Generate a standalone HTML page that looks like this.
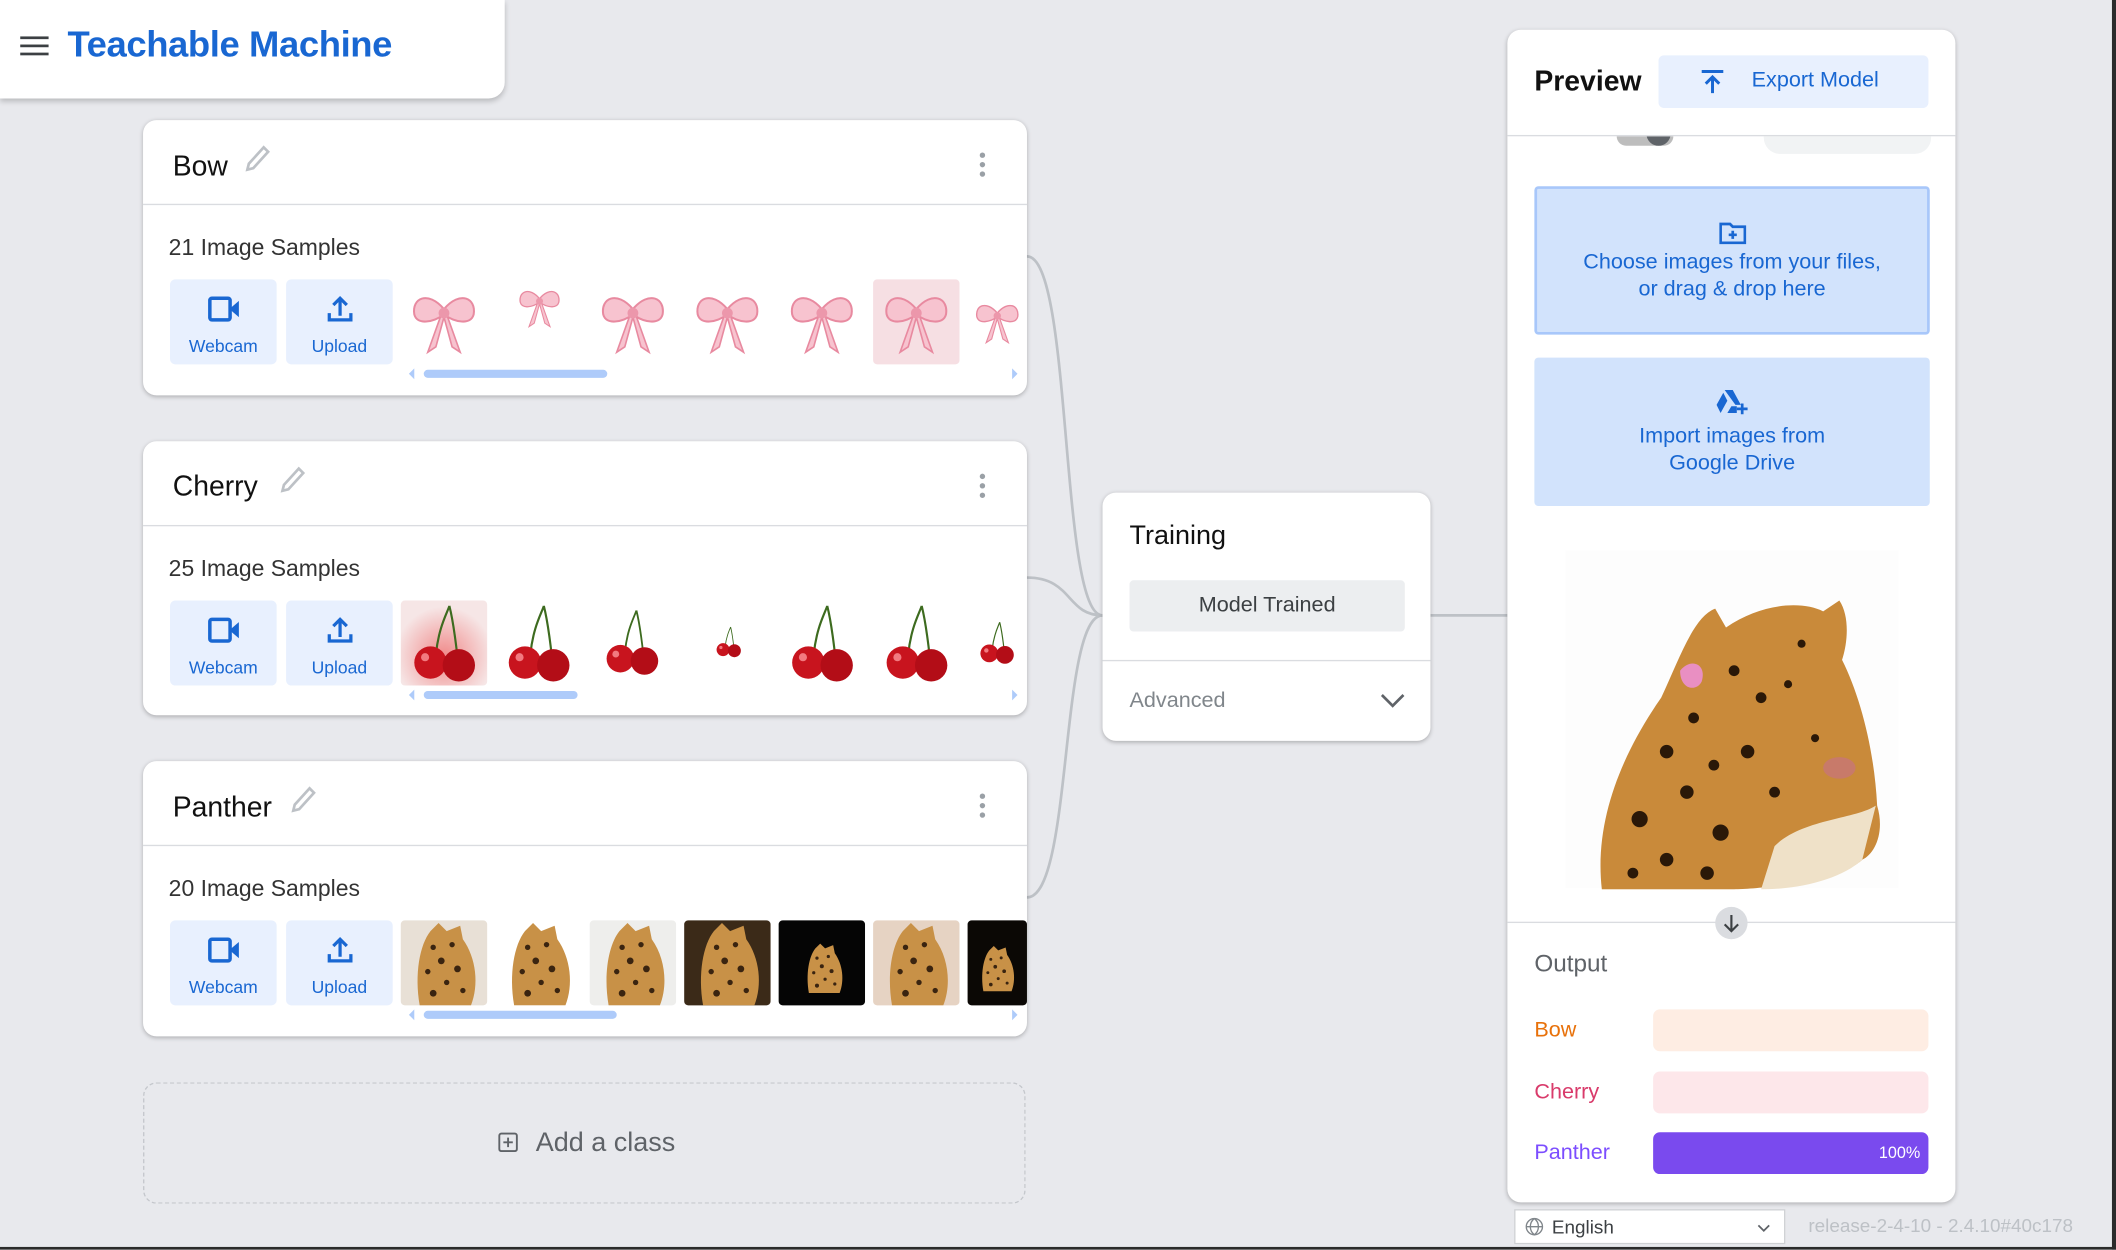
<!DOCTYPE html>
<html><head><meta charset="utf-8"><style>
html,body{margin:0;padding:0;width:2116px;height:1249px;overflow:hidden;background:#e8e9ed;}
#w{position:absolute;left:0;top:0;width:1568px;height:926px;transform:scale(1.34949);transform-origin:0 0;font-family:"Liberation Sans",sans-serif;}
.a{position:absolute;}
.card{position:absolute;background:#fff;border-radius:10px;box-shadow:0 1px 3px rgba(0,0,0,.25);}
.ttl{position:absolute;left:22px;top:22px;font-size:21px;color:#111;}
.pen{position:absolute;top:18px;}
.keb{position:absolute;left:620px;top:24px;width:4px;}
.keb i{display:block;width:4px;height:4px;border-radius:2px;background:#9aa0a6;margin-bottom:3px;}
.hr{position:absolute;left:0;right:0;top:62px;border-top:1px solid #dadce0;}
.cnt{position:absolute;left:19px;top:85px;font-size:17px;color:#333;}
.btn{position:absolute;top:118px;width:79px;height:63px;background:#e8f0fe;border-radius:4px;color:#1967d2;font-size:13px;text-align:center;}
.btn span{position:absolute;left:0;right:0;top:42px;}
.btn svg{position:absolute;left:28px;top:12px;}
.img{position:absolute;top:118px;width:64px;height:63px;border-radius:3px;overflow:hidden;}
.sb{position:absolute;top:185px;left:208px;height:6px;border-radius:3px;background:#aecbfa;}
.ar{position:absolute;top:184px;width:0;height:0;border-top:4px solid transparent;border-bottom:4px solid transparent;}
.bl{position:absolute;left:20px;font-size:16px;}
.bar{position:absolute;left:108px;width:204px;height:31px;border-radius:5px;}
</style></head><body><div id="w">
<svg class="a" style="left:0;top:0" width="1568" height="926"><g fill="none" stroke="#bdc1c6" stroke-width="2">
<path d="M761 190 C795 190,785 456,817 456"/><path d="M761 428 C795 428,790 456,817 456"/><path d="M761 665 C795 665,785 456,817 456"/><path d="M1060 456 H1117"/></g></svg>
<div class="a" style="left:1565px;top:0;width:3px;height:926px;background:#2b2b2b"></div>
<div class="a" style="left:0;top:924px;width:1568px;height:2px;background:#2b2b2b"></div>

<div class="a" style="left:0;top:0;width:374px;height:73px;background:#fff;border-radius:0 0 12px 0;box-shadow:0 2px 4px rgba(0,0,0,.2)">
<div class="a" style="left:15px;top:27px;width:21px"><div style="height:2px;background:#3c4043;margin-bottom:4px"></div><div style="height:2px;background:#3c4043;margin-bottom:4px"></div><div style="height:2px;background:#3c4043"></div></div>
<div class="a" style="left:50px;top:18px;font-size:27px;font-weight:bold;color:#1967d2;letter-spacing:-0.3px">Teachable Machine</div></div>

<svg width="0" height="0" style="position:absolute"><defs>
<symbol id="cam" viewBox="0 0 24 20"><rect x="1.5" y="2" width="15" height="16" rx="1.5" fill="none" stroke="#1967d2" stroke-width="2.6"/><path d="M16 10 L23 4 V16 Z" fill="#1967d2"/></symbol>
<symbol id="up" viewBox="0 0 20 20"><path d="M10 15 V2 M5 7 L10 2 L15 7 M2 13 V18 H18 V13" fill="none" stroke="#1967d2" stroke-width="2.4"/></symbol>
<symbol id="pen" viewBox="0 0 20 20"><path d="M3 17 L4 13 L14 2 L17 5 L7 16 Z" fill="none" stroke="#bdc1c6" stroke-width="1.8"/></symbol>
<symbol id="bow" viewBox="0 0 64 63"><path d="M32 22 C20 8,8 14,10 26 C12 34,24 32,32 26 Z M32 22 C44 8,56 14,54 26 C52 34,40 32,32 26 Z" fill="#f7c3cf" stroke="#e88aa0" stroke-width="1.5"/><path d="M30 26 L20 54 L26 50 L32 28 L38 50 L44 54 L34 26Z" fill="#f7c3cf" stroke="#e88aa0" stroke-width="1.2"/><circle cx="32" cy="25" r="4" fill="#ec97ab"/></symbol>
<symbol id="chr" viewBox="0 0 64 63"><path d="M26 40 C28 20,34 10,36 4 M42 42 C40 24,38 12,36 4" fill="none" stroke="#3d6b1f" stroke-width="1.6"/><circle cx="22" cy="46" r="12" fill="#c8141e"/><circle cx="43" cy="48" r="12" fill="#b30d17"/><circle cx="18" cy="42" r="3" fill="#f27a80"/></symbol>
<symbol id="leo" viewBox="0 0 64 63"><path d="M14 63 C10 40,14 18,22 8 L28 2 L34 8 L44 4 L46 14 C56 28,58 48,52 63Z" fill="#c89147"/><g fill="#3a2410"><circle cx="24" cy="20" r="2"/><circle cx="38" cy="18" r="2"/><circle cx="30" cy="30" r="2.5"/><circle cx="20" cy="38" r="2"/><circle cx="42" cy="36" r="2.5"/><circle cx="34" cy="46" r="2"/><circle cx="24" cy="54" r="2.5"/><circle cx="46" cy="52" r="2"/></g></symbol>
</defs></svg>

<!-- Bow card -->
<div class="card" style="left:106px;top:89px;width:655px;height:204px">
<div class="ttl" style="top:23px">Bow</div><svg class="pen" style="left:74px" width="22" height="22"><use href="#pen"/></svg>
<div class="keb"><i></i><i></i><i></i></div><div class="hr"></div>
<div class="cnt">21 Image Samples</div>
<div class="btn" style="left:20px"><svg width="24" height="20"><use href="#cam"/></svg><span>Webcam</span></div>
<div class="btn" style="left:106px"><svg width="20" height="20" style="left:30px"><use href="#up"/></svg><span>Upload</span></div>
<svg class="img" style="left:191px" width="64" height="63"><use href="#bow"/></svg>
<svg class="img" style="left:261px" width="64" height="63"><use href="#bow" transform="translate(12 0) scale(.65)"/></svg>
<svg class="img" style="left:331px" width="64" height="63"><use href="#bow"/></svg>
<svg class="img" style="left:401px" width="64" height="63"><use href="#bow"/></svg>
<svg class="img" style="left:471px" width="64" height="63"><use href="#bow"/></svg>
<svg class="img" style="left:541px;background:#f6dfe3" width="64" height="63"><use href="#bow"/></svg>
<svg class="img" style="left:611px;width:44px" width="44" height="63"><use href="#bow"/></svg>
<div class="ar" style="left:197px;border-right:4px solid #aecbfa"></div><div class="sb" style="width:136px"></div><div class="ar" style="left:644px;border-left:4px solid #aecbfa"></div>
</div>

<!-- Cherry card -->
<div class="card" style="left:106px;top:327px;width:655px;height:203px">
<div class="ttl" style="top:22px">Cherry</div><svg class="pen" style="left:100px" width="22" height="22"><use href="#pen"/></svg>
<div class="keb"><i></i><i></i><i></i></div><div class="hr"></div>
<div class="cnt">25 Image Samples</div>
<div class="btn" style="left:20px"><svg width="24" height="20"><use href="#cam"/></svg><span>Webcam</span></div>
<div class="btn" style="left:106px"><svg width="20" height="20" style="left:30px"><use href="#up"/></svg><span>Upload</span></div>
<svg class="img" style="left:191px;background:radial-gradient(circle at 50% 65%,#f08a8a,#f6e6e6 70%)" width="64" height="63"><use href="#chr"/></svg>
<svg class="img" style="left:261px" width="64" height="63"><use href="#chr"/></svg>
<svg class="img" style="left:331px" width="64" height="63"><use href="#chr" transform="translate(4 4) scale(.85)"/></svg>
<svg class="img" style="left:401px" width="64" height="63"><use href="#chr" transform="translate(20 18) scale(.4)"/></svg>
<svg class="img" style="left:471px" width="64" height="63"><use href="#chr"/></svg>
<svg class="img" style="left:541px" width="64" height="63"><use href="#chr"/></svg>
<svg class="img" style="left:611px;width:44px" width="44" height="63"><use href="#chr" transform="translate(4 6) scale(.8)"/></svg>
<div class="ar" style="left:197px;border-right:4px solid #aecbfa"></div><div class="sb" style="width:114px"></div><div class="ar" style="left:644px;border-left:4px solid #aecbfa"></div>
</div>

<!-- Panther card -->
<div class="card" style="left:106px;top:564px;width:655px;height:204px">
<div class="ttl" style="top:23px">Panther</div><svg class="pen" style="left:108px" width="22" height="22"><use href="#pen"/></svg>
<div class="keb"><i></i><i></i><i></i></div><div class="hr"></div>
<div class="cnt">20 Image Samples</div>
<div class="btn" style="left:20px"><svg width="24" height="20"><use href="#cam"/></svg><span>Webcam</span></div>
<div class="btn" style="left:106px"><svg width="20" height="20" style="left:30px"><use href="#up"/></svg><span>Upload</span></div>
<svg class="img" style="left:191px;background:#e8e0d6" width="64" height="63"><use href="#leo"/></svg>
<svg class="img" style="left:261px" width="64" height="63"><use href="#leo"/></svg>
<svg class="img" style="left:331px;background:#eeeeec" width="64" height="63"><use href="#leo"/></svg>
<svg class="img" style="left:401px;background:#3b2a18" width="64" height="63"><use href="#leo"/></svg>
<svg class="img" style="left:471px;background:#050505" width="64" height="63"><use href="#leo" transform="translate(14 16) scale(.6)"/></svg>
<svg class="img" style="left:541px;background:#e6d3c3" width="64" height="63"><use href="#leo"/></svg>
<svg class="img" style="left:611px;width:44px;background:#0b0805" width="44" height="63"><use href="#leo" transform="translate(4 10) scale(.8)"/></svg>
<div class="ar" style="left:197px;border-right:4px solid #aecbfa"></div><div class="sb" style="width:143px"></div><div class="ar" style="left:644px;border-left:4px solid #aecbfa"></div>
</div>

<div class="a" style="left:106px;top:802px;width:652px;height:88px;border:1.5px dashed #c4c7cc;border-radius:10px;">
<svg class="a" style="left:262px;top:36px" width="16" height="16"><rect x="1" y="1" width="13" height="13" rx="1.5" fill="none" stroke="#5f6368" stroke-width="1.4"/><path d="M7.5 4 V11 M4 7.5 H11" stroke="#5f6368" stroke-width="1.4"/></svg>
<div class="a" style="left:290px;top:33px;font-size:20px;color:#5f6368">Add a class</div></div>

<!-- Training -->
<div class="card" style="left:817px;top:365px;width:243px;height:184px">
<div class="a" style="left:20px;top:21px;font-size:20px;color:#111">Training</div>
<div class="a" style="left:20px;top:65px;width:204px;height:38px;background:#eceef0;border-radius:3px;color:#3c4043;font-size:16px;text-align:center;line-height:38px">Model Trained</div>
<div class="a" style="left:0;right:0;top:124px;border-top:1px solid #dadce0"></div>
<div class="a" style="left:20px;top:146px;font-size:16px;color:#80868b">Advanced</div>
<svg class="a" style="left:206px;top:148px" width="18" height="12"><path d="M1 2 L9 10 L17 2" fill="none" stroke="#5f6368" stroke-width="2"/></svg>
</div>

<!-- Preview -->
<div class="card" style="left:1117px;top:22px;width:332px;height:869px;overflow:hidden">
<div class="a" style="left:20px;top:27px;font-size:21px;color:#111;font-weight:bold">Preview</div>
<div class="a" style="left:112px;top:19px;width:200px;height:39px;background:#e8f0fe;border-radius:4px">
<svg class="a" style="left:30px;top:10px" width="20" height="20"><path d="M2 2 H18 M10 18 V6 M5 11 L10 6 L15 11" fill="none" stroke="#1967d2" stroke-width="2.2"/></svg>
<div class="a" style="left:69px;top:10px;font-size:16px;color:#1967d2">Export Model</div></div>
<div class="a" style="left:81px;top:72px;width:42px;height:14px;border-radius:7px;background:#bdbdbd"></div>
<div class="a" style="left:103px;top:68px;width:18px;height:18px;border-radius:9px;background:#5f6368"></div>
<div class="a" style="left:190px;top:72px;width:124px;height:20px;border-radius:0 0 12px 12px;background:#f1f3f4"></div>
<div class="a" style="left:0;right:0;top:60px;height:19px;background:#fff"></div>
<div class="a" style="left:0;right:0;top:78px;border-top:1px solid #dadce0"></div>
<div class="a" style="left:20px;top:116px;width:289px;height:106px;background:#d2e3fc;border:2px solid #a8c7fa;border-radius:3px;color:#1967d2;font-size:16px;text-align:center">
<svg class="a" style="left:135px;top:24px" width="20" height="17"><path d="M1 2 H8 L10 4 H19 V16 H1 Z" fill="none" stroke="#1967d2" stroke-width="2"/><path d="M10 7 V13 M7 10 H13" stroke="#1967d2" stroke-width="2"/></svg>
<div class="a" style="left:0;right:0;top:45px;line-height:20px">Choose images from your files,<br>or drag &amp; drop here</div></div>
<div class="a" style="left:20px;top:243px;width:293px;height:110px;background:#d2e3fc;border-radius:3px;color:#1967d2;font-size:16px;text-align:center">
<svg class="a" style="left:135px;top:23px" width="24" height="20"><path d="M6 1 H12 L18 12 H14 Z M5 3 L0 12 L3 18 L8 9 Z M8 18 L11 13 H15 V18Z" fill="#1967d2"/><path d="M19 11 V19 M15 15 H23" stroke="#1967d2" stroke-width="2"/></svg>
<div class="a" style="left:0;right:0;top:49px;line-height:20px">Import images from<br>Google Drive</div></div>
<div class="a" style="left:43px;top:386px;width:247px;height:250px;background:#fdfdfd"></div>
<svg class="a" style="left:58px;top:415px" width="230" height="222"><path d="M12 222 C6 170,28 120,56 80 C70 50,80 20,96 14 L104 28 C130 10,160 8,176 16 L188 8 C196 20,194 40,190 52 C204 80,214 120,216 160 C222 180,214 196,205 200 C190 215,130 222,110 222 Z" fill="#c98a3a"/><path d="M140 190 C160 170,200 170,215 160 L205 200 C190 214,160 222,130 222Z" fill="#efe1c8"/><g fill="#2a1808"><circle cx="60" cy="120" r="5"/><circle cx="80" cy="95" r="4"/><circle cx="40" cy="170" r="6"/><circle cx="75" cy="150" r="5"/><circle cx="100" cy="180" r="6"/><circle cx="60" cy="200" r="5"/><circle cx="110" cy="60" r="4"/><circle cx="130" cy="80" r="4"/><circle cx="150" cy="70" r="3"/><circle cx="120" cy="120" r="5"/><circle cx="95" cy="130" r="4"/><circle cx="140" cy="150" r="4"/><circle cx="170" cy="110" r="3"/><circle cx="35" cy="210" r="4"/><circle cx="90" cy="210" r="5"/><circle cx="160" cy="40" r="3"/></g><ellipse cx="188" cy="132" rx="12" ry="8" fill="#c87a6a"/><path d="M70 60 C78 50,90 55,86 68 C82 76,70 74,70 60Z" fill="#e98fc2"/></svg>
<div class="a" style="left:0;right:0;top:661px;border-top:1px solid #dadce0"></div>
<div class="a" style="left:154px;top:650px;width:24px;height:24px;border-radius:12px;background:#dadce0"></div>
<svg class="a" style="left:158px;top:654px" width="16" height="16"><path d="M8 2 V14 M3 9 L8 14 L13 9" fill="none" stroke="#3c4043" stroke-width="1.6"/></svg>
<div class="a" style="left:20px;top:682px;font-size:18px;color:#5f6368">Output</div>
<div class="bl" style="top:733px;color:#e8710a">Bow</div><div class="bar" style="top:726px;background:#feede3"></div>
<div class="bl" style="top:779px;color:#d93b6b">Cherry</div><div class="bar" style="top:772px;background:#fde7ea"></div>
<div class="bl" style="top:824px;color:#7c4dff">Panther</div><div class="bar" style="top:817px;background:#7a4aee;color:#fff;font-size:12px;text-align:right;line-height:31px;box-sizing:border-box;padding-right:6px">100%</div>
</div>

<div class="a" style="left:1122px;top:896px;width:199px;height:24px;background:#fff;border:1px solid #cfd1d4">
<svg class="a" style="left:7px;top:5px" width="14" height="14"><circle cx="7" cy="7" r="6" fill="none" stroke="#80868b"/><path d="M1 7 H13 M7 1 C3 4,3 10,7 13 C11 10,11 4,7 1" fill="none" stroke="#80868b"/></svg>
<div class="a" style="left:27px;top:4px;font-size:14px;color:#3c4043">English</div>
<svg class="a" style="left:179px;top:10px" width="10" height="6"><path d="M1 1 L5 5 L9 1" fill="none" stroke="#5f6368" stroke-width="1.3"/></svg></div>
<div class="a" style="left:1340px;top:900px;font-size:14px;color:#bdc1c6">release-2-4-10 - 2.4.10#40c178</div>
</div></body></html>
